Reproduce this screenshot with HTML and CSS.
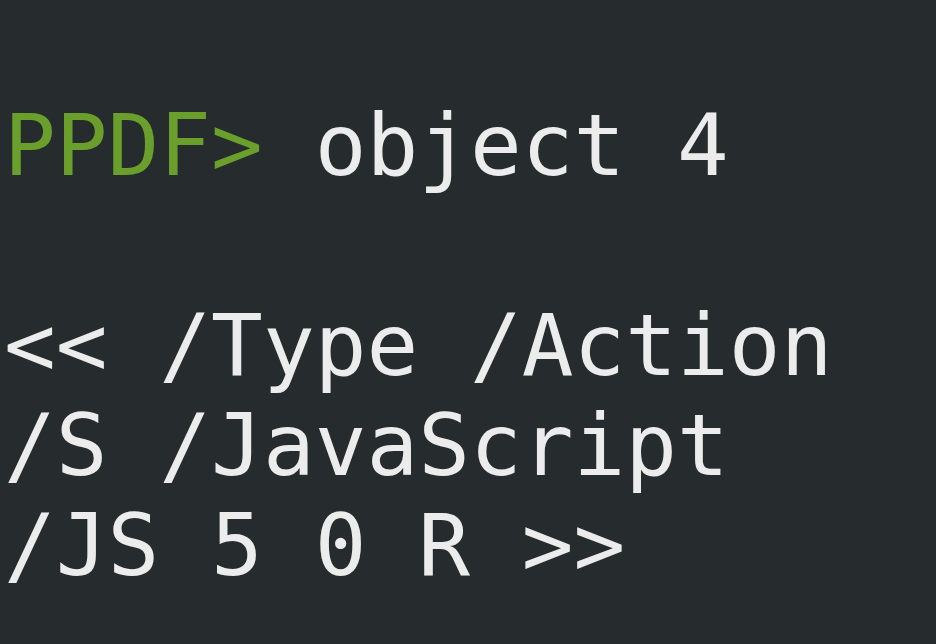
FILE: index.html
```html
<!DOCTYPE html>
<html>
<head>
<meta charset="utf-8">
<link rel="stylesheet" href="styles.css">
</head>
<body>
<pre class="term"><span class="prompt">PPDF&gt;</span> object 4

&lt;&lt; /Type /Action
/S /JavaScript
/JS 5 0 R &gt;&gt;</pre>
</body>
</html>
```
FILE: styles.css
```css
html, body {
  margin: 0;
  padding: 0;
  background: #262b2e;
  width: 936px;
  height: 644px;
  overflow: hidden;
}
.term {
  margin: 0;
  padding: 95px 0 0 4px;
  font-family: "DejaVu Sans Mono", monospace;
  font-size: 86px;
  line-height: 100px;
  color: #ececec;
  white-space: pre;
}
.prompt {
  color: #6a9f2c;
}
```
